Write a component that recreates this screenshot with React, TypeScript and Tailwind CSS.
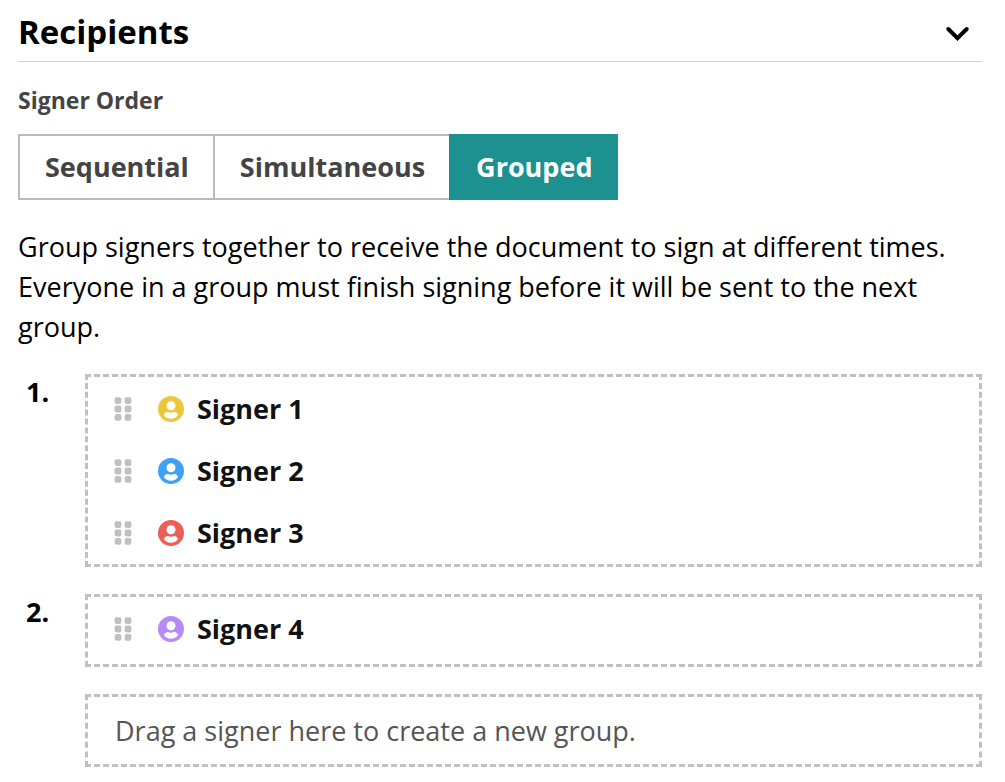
import React, { useState } from "react";

type Signer = {
  name: string;
  color: string;
};

const ORDER_OPTIONS = ["Sequential", "Simultaneous", "Grouped"];

const signerGroups: Signer[][] = [
  [
    { name: "Signer 1", color: "text-[#ecc63b]" },
    { name: "Signer 2", color: "text-[#3da2f4]" },
    { name: "Signer 3", color: "text-[#ec5f59]" },
  ],
  [{ name: "Signer 4", color: "text-[#b78af8]" }],
];

const DragHandle: React.FC = () => (
  <svg
    viewBox="0 0 18 24"
    className="h-6 w-[18px] shrink-0 cursor-grab fill-[#c0c0c0]"
    aria-hidden="true"
  >
    {[0.3, 8.6, 16.9].map((y) => (
      <g key={y}>
        <rect x="0.6" y={y} width="6.8" height="6.8" rx="2" />
        <rect x="10.600" y={y} width="6.8" height="6.8" rx="2" />
      </g>
    ))}
  </svg>
);

const SignerIcon: React.FC<{ color: string }> = ({ color }) => (
  <svg
    viewBox="0 0 26 26"
    className={`h-[26px] w-[26px] shrink-0 ${color}`}
    aria-hidden="true"
  >
    <circle cx="13" cy="13" r="13" fill="currentColor" />
    <circle cx="13" cy="9.8" r="4.5" fill="#fff" />
    <path
      d="M6 19.3C6 17.2 8.2 16 10 16C11 16.6 12 16.8 13 16.8C14 16.8 15 16.6 16 16C17.8 16 20 17.2 20 19.3C18.5 21.5 16 22.8 13 22.8C10 22.8 7.5 21.5 6 19.3Z"
      fill="#fff"
    />
  </svg>
);

const App: React.FC = () => {
  const [order, setOrder] = useState("Grouped");
  const [open, setOpen] = useState(true);

  return (
    <main className="bg-white pt-2 pr-[23px] pb-[15px] pl-[18px] font-['Open_Sans',sans-serif] text-[27px] leading-10 text-black">
      <header className="flex items-center justify-between border-b border-[#cfcfcf] pb-[5px]">
        <h2 className="text-[33px] leading-[48px] font-bold">Recipients</h2>
        <button
          type="button"
          aria-label="Toggle recipients"
          aria-expanded={open}
          onClick={() => setOpen(!open)}
          className="mr-3 pt-1"
        >
          <svg viewBox="0 0 26 16" className="h-4 w-[26px]" fill="none">
            <path
              d="M4.3 3L13.5 12.2L22.7 3"
              stroke="currentColor"
              strokeWidth="4"
              strokeLinecap="round"
            />
          </svg>
        </button>
      </header>

      {open && (
        <>
          <h3 className="mt-[22px] text-[23px] leading-8 font-bold text-[#444]">
            Signer Order
          </h3>

          <div className="mt-[18px] flex">
            {ORDER_OPTIONS.map((option) => (
              <button
                key={option}
                type="button"
                aria-pressed={order === option}
                onClick={() => setOrder(option)}
                className={`-mr-0.5 border-2 py-[11px] pr-6 pl-[25px] font-bold ${
                  order === option
                    ? "border-[#1d918f] bg-[#1d918f] text-white"
                    : "border-[#bbb] text-[#444]"
                }`}
              >
                {option}
              </button>
            ))}
          </div>

          <p className="mt-[27px]">
            Group signers together to receive the document to sign at different
            times. Everyone in a group must finish signing before it will be
            sent to the next group.
          </p>

          <ol className="mt-[27px] flex flex-col gap-[27px]">
            {signerGroups.map((group, index) => (
              <li key={index} className="flex">
                <span className="w-[67px] shrink-0 pl-2 leading-9 font-bold">
                  {index + 1}.
                </span>
                <ul className="min-h-[73px] grow border-3 border-dashed border-[#c0c0c0] pt-px">
                  {group.map((signer) => (
                    <li
                      key={signer.name}
                      className="flex h-[62px] items-center pl-[26px] font-bold text-[#111]"
                    >
                      <DragHandle />
                      <span className="ml-[26px] flex items-center gap-[13px]">
                        <SignerIcon color={signer.color} />
                        {signer.name}
                      </span>
                    </li>
                  ))}
                </ul>
              </li>
            ))}
          </ol>

          <div className="mt-[27px] ml-[67px] flex min-h-[73px] items-center border-3 border-dashed border-[#c0c0c0] px-[27px] text-[#555]">
            Drag a signer here to create a new group.
          </div>
        </>
      )}
    </main>
  );
};

export default App;
